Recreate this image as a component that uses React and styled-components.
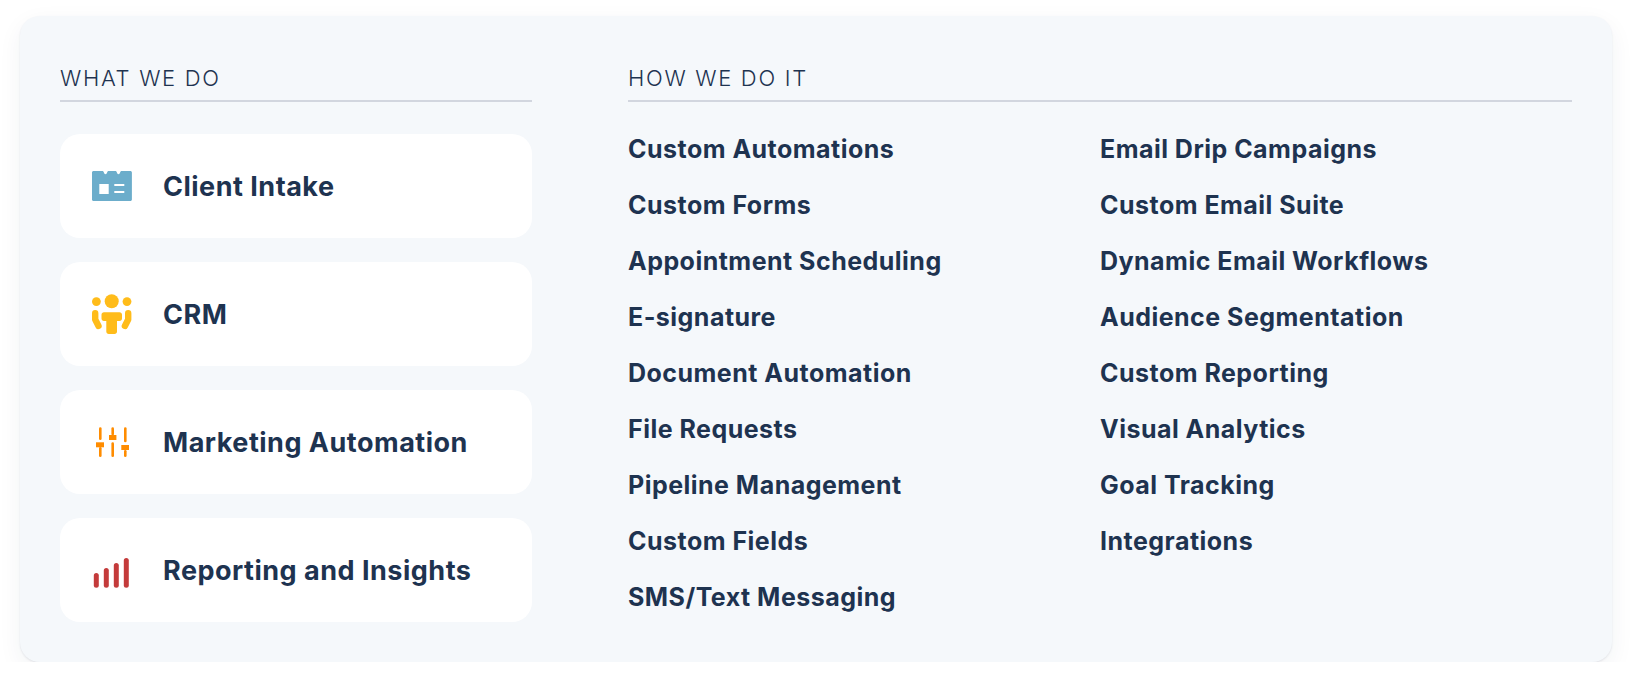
import React from 'react';
import styled, { createGlobalStyle } from 'styled-components';

const GlobalStyle = createGlobalStyle`
    body {
        margin: 0;
        background: #ffffff;
        font-family: 'Inter', 'Liberation Sans', sans-serif;
        color: #1e3350;
    }
`;

const services = [
    { title: 'Client Intake', icon: <IntakeIcon /> },
    { title: 'CRM', icon: <CrmIcon /> },
    { title: 'Marketing Automation', icon: <SlidersIcon /> },
    { title: 'Reporting and Insights', icon: <BarsIcon /> },
];

const methods = [
    'Custom Automations',
    'Custom Forms',
    'Appointment Scheduling',
    'E-signature',
    'Document Automation',
    'File Requests',
    'Pipeline Management',
    'Custom Fields',
    'SMS/Text Messaging',
    'Email Drip Campaigns',
    'Custom Email Suite',
    'Dynamic Email Workflows',
    'Audience Segmentation',
    'Custom Reporting',
    'Visual Analytics',
    'Goal Tracking',
    'Integrations',
];

function IntakeIcon() {
    return (
        <svg width="40" height="40" viewBox="0 0 40 40">
            <path
                fill="#6cadcb"
                d="M1.5 5h8.7c.8 0 1.3.5 1.6 1.2.4 1.1.9 2 1.7 2s1.3-.9 1.7-2c.3-.7.8-1.2 1.6-1.2h6.4c.8 0 1.3.5 1.6 1.2.4 1.1.9 2 1.7 2s1.3-.9 1.7-2c.3-.7.8-1.2 1.6-1.2h8.6c.8 0 1.5.7 1.5 1.5v27c0 .8-.7 1.5-1.5 1.5h-37C.7 35 0 34.3 0 33.5V6.5C0 5.7.7 5 1.5 5z"
            />
            <rect x="7.3" y="18" width="9.4" height="10" fill="#fff" />
            <rect x="22.3" y="18" width="10" height="2" fill="#fff" />
            <rect x="22.3" y="25" width="10" height="2" fill="#fff" />
        </svg>
    );
}

function CrmIcon() {
    return (
        <svg width="40" height="40" viewBox="0 0 40 40" fill="#ffbc1a">
            <circle cx="19.7" cy="7.3" r="7" />
            <circle cx="4.4" cy="7.6" r="4.4" />
            <circle cx="35" cy="7.6" r="4.4" />
            <path d="M12 18.3h15.5c1.5 0 2.5 1 2.5 2.5v3.7c0 1.5-1 2.5-2.5 2.5H25v10.5c0 1.5-1 2.5-2.5 2.5h-5.700c-1.500 0-2.500-1-2.500-2.500V27H12c-1.500 0-2.500-1-2.500-2.500v-3.700c0-1.500 1-2.500 2.500-2.500z" />
            <path
                d="M3.2 19.2v6.3l3.3 6.500M36.2 19.2v6.3L32.900 32"
                fill="none"
                stroke="#ffbc1a"
                strokeWidth="6.4"
                strokeLinecap="round"
                strokeLinejoin="round"
            />
        </svg>
    );
}

function SlidersIcon() {
    return (
        <svg width="40" height="40" viewBox="0 0 40 40" fill="#ff8c00">
            <rect x="7" y="5.3" width="2.6" height="12.7" rx="1.3" />
            <rect x="4" y="20.3" width="8" height="5" />
            <rect x="7" y="25" width="2.6" height="10" rx="1.3" />
            <rect x="19.4" y="5.3" width="2.6" height="8" rx="1.3" />
            <rect x="17" y="13" width="7.4" height="5" />
            <rect x="19.4" y="20.3" width="2.6" height="14.7" rx="1.3" />
            <rect x="32" y="5.3" width="2.6" height="15" rx="1.3" />
            <rect x="29.3" y="23" width="7.7" height="5" />
            <rect x="32" y="28" width="2.6" height="7" rx="1.3" />
        </svg>
    );
}

function BarsIcon() {
    return (
        <svg width="40" height="40" viewBox="0 0 40 40" fill="#c43b3b">
            <rect x="1.8" y="23" width="5" height="14.7" rx="2.5" />
            <rect x="11.8" y="18" width="5" height="19.7" rx="2.5" />
            <rect x="21.8" y="13" width="5" height="24.7" rx="2.5" />
            <rect x="31.8" y="8" width="5" height="29.7" rx="2.5" />
        </svg>
    );
}

function App() {
    return (
        <>
            <GlobalStyle />
            <Panel>
                <Column>
                    <Heading>What we do</Heading>
                    <CardList>
                        {services.map((service) => (
                            <Card key={service.title}>
                                <IconBox>{service.icon}</IconBox>
                                <CardTitle>{service.title}</CardTitle>
                            </Card>
                        ))}
                    </CardList>
                </Column>
                <Column>
                    <Heading>How we do it</Heading>
                    <MethodGrid>
                        {methods.map((method) => (
                            <Method key={method}>{method}</Method>
                        ))}
                    </MethodGrid>
                </Column>
            </Panel>
        </>
    );
}

export default App;

const Panel = styled.div`
    box-sizing: border-box;
    width: 1592px;
    height: 646px;
    margin: 16px 0 0 20px;
    padding: 40px;
    display: grid;
    grid-template-columns: 472px 944px;
    column-gap: 96px;
    background: #f5f8fb;
    border-radius: 20px;
    box-shadow: 0 1px 2px rgba(30, 51, 80, 0.1), 0 8px 24px rgba(30, 51, 80, 0.06);
`;

const Column = styled.div`
    display: flex;
    flex-direction: column;
`;

const Heading = styled.h2`
    margin: 0;
    height: 44px;
    line-height: 44px;
    border-bottom: 2px solid #d2d6df;
    font-size: 22px;
    font-weight: 300;
    letter-spacing: 1.7px;
    text-transform: uppercase;
    color: #1e3350;
`;

const CardList = styled.div`
    margin-top: 32px;
    display: flex;
    flex-direction: column;
    gap: 24px;
`;

const Card = styled.div`
    height: 104px;
    padding-left: 32px;
    display: flex;
    align-items: center;
    gap: 31px;
    background: #ffffff;
    border-radius: 20px;
`;

const IconBox = styled.div`
    width: 40px;
    height: 40px;
    display: flex;
`;

const CardTitle = styled.div`
    font-size: 27px;
    font-weight: 650;
    letter-spacing: 0.5px;
    color: #1e3350;
`;

const MethodGrid = styled.div`
    margin-top: 19px;
    display: grid;
    grid-template-rows: repeat(9, 56px);
    grid-template-columns: 472px 472px;
    grid-auto-flow: column;
`;

const Method = styled.div`
    line-height: 56px;
    font-size: 25px;
    font-weight: 650;
    letter-spacing: 0.48px;
    color: #1e3350;
`;
